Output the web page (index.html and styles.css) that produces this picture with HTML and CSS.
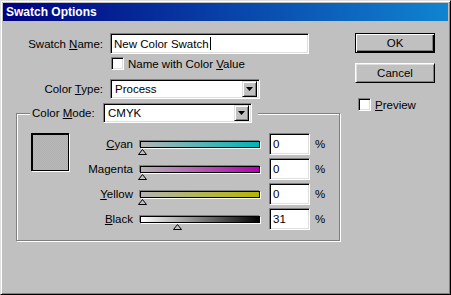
FILE: index.html
```html
<!DOCTYPE html>
<html lang="en">
<head>
<meta charset="UTF-8">
<title>Swatch Options</title>
<link rel="stylesheet" href="styles.css">
</head>
<body>
<div class="window">
  <div class="titlebar">Swatch Options</div>
  <div class="dialog">
    <div class="main">
      <div class="field-row name-row">
        <span class="field-label">Swatch <u>N</u>ame:</span>
        <div class="textbox name-box">New Color Swatch<span class="caret"></span></div>
      </div>
      <div class="check-row name-check">
        <span class="checkbox"></span>
        <span class="check-text">Name with Color <u>V</u>alue</span>
      </div>
      <div class="field-row type-row">
        <span class="field-label">Color <u>T</u>ype:</span>
        <div class="dropdown type-select">
          <span class="dropdown-text">Process</span>
          <span class="dropdown-btn"><svg width="7" height="4" viewBox="0 0 7 4"><polygon points="0,0 7,0 3.5,4" fill="#000"/></svg></span>
        </div>
      </div>
      <fieldset class="group">
        <legend class="group-legend">
          <span class="legend-label">Color <u>M</u>ode:</span>
          <div class="dropdown mode-select">
            <span class="dropdown-text">CMYK</span>
            <span class="dropdown-btn"><svg width="7" height="4" viewBox="0 0 7 4"><polygon points="0,0 7,0 3.5,4" fill="#000"/></svg></span>
          </div>
        </legend>
        <div class="group-body">
          <div class="swatch"></div>
          <div class="sliders">
            <div class="slider-row">
              <span class="slider-label"><u>C</u>yan</span>
              <div class="slider"><div class="bar bar-cyan"></div><svg class="thumb" style="--v:0" width="9" height="6" viewBox="0 0 9 6"><polygon points="0.5,5.5 4.5,0.5 8.5,5.5" fill="#c0c0c0" stroke="#000"/></svg></div>
              <div class="textbox value-box">0</div>
              <span class="pct">%</span>
            </div>
            <div class="slider-row">
              <span class="slider-label">Magenta</span>
              <div class="slider"><div class="bar bar-magenta"></div><svg class="thumb" style="--v:0" width="9" height="6" viewBox="0 0 9 6"><polygon points="0.5,5.5 4.5,0.5 8.5,5.5" fill="#c0c0c0" stroke="#000"/></svg></div>
              <div class="textbox value-box">0</div>
              <span class="pct">%</span>
            </div>
            <div class="slider-row">
              <span class="slider-label"><u>Y</u>ellow</span>
              <div class="slider"><div class="bar bar-yellow"></div><svg class="thumb" style="--v:0" width="9" height="6" viewBox="0 0 9 6"><polygon points="0.5,5.5 4.5,0.5 8.5,5.5" fill="#c0c0c0" stroke="#000"/></svg></div>
              <div class="textbox value-box">0</div>
              <span class="pct">%</span>
            </div>
            <div class="slider-row">
              <span class="slider-label"><u>B</u>lack</span>
              <div class="slider"><div class="bar bar-black"></div><svg class="thumb" style="--v:31" width="9" height="6" viewBox="0 0 9 6"><polygon points="0.5,5.5 4.5,0.5 8.5,5.5" fill="#c0c0c0" stroke="#000"/></svg></div>
              <div class="textbox value-box">31</div>
              <span class="pct">%</span>
            </div>
          </div>
        </div>
      </fieldset>
    </div>
    <div class="side">
      <button class="btn btn-default">OK</button>
      <button class="btn">Cancel</button>
      <div class="check-row preview">
        <span class="checkbox"></span>
        <span class="check-text"><u>P</u>review</span>
      </div>
    </div>
  </div>
</div>
</body>
</html>
```

FILE: styles.css
```css
body {
  margin: 0;
  font-family: "Liberation Sans", Arial, sans-serif;
  font-size: 11.5px;
  color: #000;
}

/* window frame */
.window {
  width: 451px;
  height: 295px;
  box-sizing: border-box;
  background: #c0c0c0;
  border: 1px solid;
  border-color: #dfdfdf #000 #000 #dfdfdf;
  box-shadow: inset 1px 1px #fff, inset -1px -1px #808080;
  padding: 2px;
}

.titlebar {
  height: 18px;
  line-height: 18px;
  padding-left: 3px;
  background: linear-gradient(to right, #000080, #1084d0);
  color: #fff;
  font-weight: bold;
  font-size: 12px;
}

.dialog {
  display: flex;
  padding-top: 12px;
}

.main {
  width: 352px;
}

.side {
  display: flex;
  flex-direction: column;
  align-items: flex-start;
}

/* rows */
.field-row {
  display: flex;
  align-items: center;
}

.field-label {
  width: 100px;
  margin-right: 7px;
  text-align: right;
}

.type-row {
  margin-top: 9px;
}

/* sunken controls */
.textbox,
.dropdown,
.checkbox {
  box-sizing: border-box;
  background: #fff;
  border: 1px solid;
  border-color: #808080 #fff #fff #808080;
  box-shadow: inset 1px 1px #000, inset -1px -1px #dfdfdf;
}

.textbox {
  display: flex;
  align-items: center;
  padding-left: 3px;
}

.name-box {
  width: 199px;
  height: 21px;
}

.caret {
  display: inline-block;
  width: 1px;
  height: 13px;
  margin-left: 1px;
  background: #000;
}

.check-row {
  display: flex;
  align-items: center;
}

.checkbox {
  width: 13px;
  height: 13px;
}

.check-text {
  margin-left: 4px;
}

.name-check {
  margin: 3px 0 0 108px;
}

.dropdown {
  display: flex;
  align-items: center;
  height: 20px;
  padding: 2px;
}

.dropdown-text {
  flex: 1;
  padding-left: 2px;
}

.dropdown-btn {
  width: 15px;
  height: 16px;
  box-sizing: border-box;
  display: flex;
  align-items: center;
  justify-content: center;
  background: #c0c0c0;
  border: 1px solid;
  border-color: #dfdfdf #000 #000 #dfdfdf;
  box-shadow: inset 1px 1px #fff, inset -1px -1px #808080;
}

.type-select {
  width: 150px;
}

.mode-select {
  width: 149px;
}

/* group box */
.group {
  width: 324px;
  box-sizing: border-box;
  margin: 4px 0 0 13px;
  padding: 0;
  min-inline-size: 0;
  border: 1px solid #808080;
  box-shadow: 1px 1px #fff, inset 1px 1px #fff;
}

.group-legend {
  display: flex;
  align-items: center;
  margin-left: 13px;
  padding: 0 6px 0 2px;
  background: #c0c0c0;
}

.legend-label {
  width: 64px;
  margin-right: 7px;
}

.group-body {
  display: flex;
  padding: 10px 0 10px 14px;
}

.swatch {
  width: 38px;
  height: 38px;
  box-sizing: border-box;
  border-style: solid;
  border-color: #000;
  border-width: 2px 1px 1px 2px;
  box-shadow: 1px 1px #fff;
  background: repeating-conic-gradient(#b9b9b9 0 25%, #b0b0b0 0 50%) 0 0 / 2px 2px;
}

.sliders {
  display: flex;
  flex-direction: column;
  gap: 3px;
}

.slider-row {
  display: flex;
  align-items: center;
  height: 22px;
}

.slider-label {
  width: 64px;
  text-align: right;
}

.slider {
  position: relative;
  width: 120px;
  height: 7px;
  margin-left: 7px;
}

.bar {
  height: 7px;
  box-sizing: border-box;
  border: 1px solid #000;
  box-shadow: -1px -1px #808080, 1px 1px #fff;
}

.bar-cyan {
  background: linear-gradient(to right, #b4b4b4, #00b4b4);
}

.bar-magenta {
  background: linear-gradient(to right, #b4b4b4, #b400b4);
}

.bar-yellow {
  background: linear-gradient(to right, #b4b4b4, #b4b400);
}

.bar-black {
  background: linear-gradient(to right, #fff, #000);
}

.thumb {
  position: absolute;
  top: 8px;
  left: calc(var(--v) * 1.13px - 2px);
}

.value-box {
  width: 41px;
  height: 22px;
  margin-left: 9px;
}

.pct {
  margin-left: 5px;
}

/* buttons */
.btn {
  width: 80px;
  height: 20px;
  padding: 0;
  font: inherit;
  color: #000;
  background: #c0c0c0;
  border: 1px solid;
  border-color: #fff #000 #000 #fff;
  box-shadow: inset 1px 1px #dfdfdf, inset -1px -1px #808080;
}

.btn + .btn {
  margin-top: 10px;
}

.btn-default {
  border: 1px solid #000;
  box-shadow: inset 1px 1px #fff, inset -1px -1px #000, inset -2px -2px #808080;
}

.preview {
  margin: 15px 0 0 3px;
}
```
